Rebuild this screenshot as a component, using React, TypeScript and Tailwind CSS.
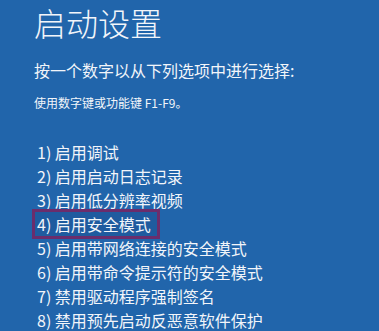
import React from "react";

const items = [
  "1) 启用调试",
  "2) 启用启动日志记录",
  "3) 启用低分辨率视频",
  "4) 启用安全模式",
  "5) 启用带网络连接的安全模式",
  "6) 启用带命令提示符的安全模式",
  "7) 禁用驱动程序强制签名",
  "8) 禁用预先启动反恶意软件保护",
];

export default function App() {
  return (
    <div
      className="w-[379px] h-[331px] overflow-hidden bg-[#2165ab] text-[#f2f5fa] pl-[34px]"
      style={{ fontFamily: '"Noto Sans CJK SC", "Noto Sans", sans-serif' }}
    >
      <div className="pt-[5px] text-[32px] leading-[34px] font-light">启动设置</div>
      <div className="mt-[19px] text-[16px] leading-[24px] font-normal">按一个数字以从下列选项中进行选择:</div>
      <div className="mt-[12px] text-[12px] leading-[18px] font-normal">使用数字键或功能键 F1-F9。</div>
      <div className="mt-[28px] pl-[3px] flex flex-col">
        {items.map((t, i) =>
          i === 3 ? (
            <div
              key={i}
              className="w-fit -ml-[2px] pl-[2px] pr-[6px] text-[16px] leading-[24px] font-normal bg-[#1f5b9f] outline-[3px] outline-solid outline-[#6b2d6c]"
            >
              {t}
            </div>
          ) : (
            <div key={i} className="text-[16px] leading-[24px] font-normal">
              {t}
            </div>
          )
        )}
      </div>
    </div>
  );
}
